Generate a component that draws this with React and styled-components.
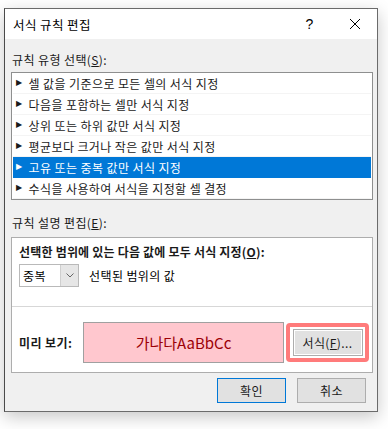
import React from "react";
import styled, { createGlobalStyle } from "styled-components";

const GlobalStyle = createGlobalStyle`
  html, body {
    margin: 0;
    padding: 0;
    background: #ffffff;
  }
  body {
    font-family: "Noto Sans CJK KR", "Noto Sans", sans-serif;
    font-size: 12px;
    letter-spacing: 0.4px;
    color: #000000;
  }
`;

const Page = styled.div`
  width: 388px;
  height: 429px;
  padding: 8px 0 0 4px;
  box-sizing: border-box;
`;

const Window = styled.div`
  width: 374px;
  height: 404px;
  box-sizing: border-box;
  border: 1px solid #6b6b6b;
  border-left-color: #4a4a4a;
  background: #f0f0f0;
  box-shadow: 0 5px 16px rgba(0, 0, 0, 0.22);
  display: flex;
  flex-direction: column;
`;

const TitleBar = styled.div`
  height: 30px;
  background: #ffffff;
  display: flex;
  align-items: center;
  padding-left: 8px;
  font-size: 12.5px;
`;

const Title = styled.div`
  flex: 1;
`;

const TitleButton = styled.div`
  width: 45px;
  height: 30px;
  display: flex;
  align-items: center;
  justify-content: center;
  font-family: "Liberation Sans", sans-serif;
  font-size: 14px;
`;

const Body = styled.div`
  flex: 1;
  display: flex;
  flex-direction: column;
  padding: 13px 4px 0 6px;
`;

const Label = styled.div`
  height: 16px;
  line-height: 16px;
  padding-left: 1px;
  margin-bottom: ${({ gap }) => gap}px;
  color: #1a1a1a;
`;

const U = styled.span`
  text-decoration: underline;
  text-underline-offset: 1px;
`;

const ListBox = styled.div`
  height: 128px;
  box-sizing: border-box;
  border: 1px solid #8e8f8f;
  background: #ffffff;
  margin-bottom: 15px;
`;

const Row = styled.div`
  height: 21px;
  margin: 0 1px;
  display: flex;
  align-items: center;
  padding-left: 3px;
  gap: 6px;
  box-sizing: border-box;
  border-bottom: 1px solid ${({ selected }) => (selected ? "#0078d7" : "#f4f4f4")};
  background: ${({ selected }) => (selected ? "#0078d7" : "#ffffff")};
  color: ${({ selected }) => (selected ? "#ffffff" : "#1a1a1a")};
`;

const Arrow = styled.span`
  font-size: 8px;
  line-height: 1;
  font-family: "DejaVu Sans", sans-serif;
`;

const DescBox = styled.div`
  height: 136px;
  box-sizing: border-box;
  border: 1px solid #adadad;
  background: #ffffff;
  display: flex;
  flex-direction: column;
`;

const DescTop = styled.div`
  padding: 6px 7px 0;
  height: 69px;
  box-sizing: border-box;
  border-bottom: 1px solid #d7d7d7;
`;

const BoldText = styled.div`
  font-weight: 700;
  letter-spacing: 0.2px;
  line-height: 16px;
  height: 16px;
  color: #1a1a1a;
`;

const ConditionRow = styled.div`
  margin-top: 4px;
  display: flex;
  align-items: center;
  gap: 10px;
`;

const Select = styled.div`
  width: 60px;
  height: 23px;
  box-sizing: border-box;
  border: 1px solid #b9b9b9;
  display: flex;
  background: #ffffff;
`;

const SelectValue = styled.div`
  flex: 1;
  padding-left: 3px;
  line-height: 21px;
`;

const SelectArrow = styled.div`
  width: 17px;
  background: #e6e6e6;
  border-left: 1px solid #cfcfcf;
  display: flex;
  align-items: center;
  justify-content: center;
`;

const PreviewRow = styled.div`
  flex: 1;
  display: flex;
  align-items: center;
  padding: 6px 0 0 7px;
`;

const PreviewLabel = styled.div`
  width: 64px;
  font-weight: 700;
  color: #1a1a1a;
`;

const PreviewBox = styled.div`
  width: 201px;
  height: 41px;
  box-sizing: border-box;
  border: 1px solid #a0a0a0;
  background: #ffc7ce;
  color: #9c0006;
  font-size: 15px;
  letter-spacing: 0;
  display: flex;
  align-items: center;
  justify-content: center;
`;

const Highlight = styled.div`
  margin-left: 2px;
  width: 83px;
  height: 39px;
  box-sizing: border-box;
  border: 4px solid #ff7b7b;
  border-radius: 4px;
  display: flex;
  align-items: center;
  justify-content: center;
`;

const Button = styled.div`
  width: ${({ w }) => w}px;
  height: ${({ h }) => h}px;
  box-sizing: border-box;
  border: 1px solid ${({ primary }) => (primary ? "#0078d7" : "#adadad")};
  box-shadow: ${({ inset }) => (inset ? "inset 0 0 0 1px #ffffff" : "none")};
  background: #e1e1e1;
  display: flex;
  align-items: center;
  justify-content: center;
  color: #1a1a1a;
`;

const Footer = styled.div`
  display: flex;
  justify-content: flex-end;
  gap: 11px;
  padding: 5px 7px 0 0;
`;

const rules = [
  "셀 값을 기준으로 모든 셀의 서식 지정",
  "다음을 포함하는 셀만 서식 지정",
  "상위 또는 하위 값만 서식 지정",
  "평균보다 크거나 작은 값만 서식 지정",
  "고유 또는 중복 값만 서식 지정",
  "수식을 사용하여 서식을 지정할 셀 결정",
];

export default function App() {
  return (
    <Page>
      <GlobalStyle />
      <Window>
        <TitleBar>
          <Title>서식 규칙 편집</Title>
          <TitleButton>?</TitleButton>
          <TitleButton>
            <svg width="12" height="12" viewBox="0 0 12 12">
              <path d="M1 1L11 11M11 1L1 11" stroke="#000" strokeWidth="1" />
            </svg>
          </TitleButton>
        </TitleBar>
        <Body>
          <Label gap={4}>
            규칙 유형 선택(<U>S</U>):
          </Label>
          <ListBox>
            {rules.map((r, i) => (
              <Row key={r} selected={i === 4}>
                <Arrow>▶</Arrow>
                {r}
              </Row>
            ))}
          </ListBox>
          <Label gap={6}>
            규칙 설명 편집(<U>E</U>):
          </Label>
          <DescBox>
            <DescTop>
              <BoldText>
                선택한 범위에 있는 다음 값에 모두 서식 지정(<U>O</U>):
              </BoldText>
              <ConditionRow>
                <Select>
                  <SelectValue>중복</SelectValue>
                  <SelectArrow>
                    <svg width="8" height="5" viewBox="0 0 8 5">
                      <path d="M0.5 0.5L4 4L7.5 0.5" stroke="#666" fill="none" />
                    </svg>
                  </SelectArrow>
                </Select>
                <span>선택된 범위의 값</span>
              </ConditionRow>
            </DescTop>
            <PreviewRow>
              <PreviewLabel>미리 보기:</PreviewLabel>
              <PreviewBox>가나다AaBbCc</PreviewBox>
              <Highlight>
                <Button inset w={70} h={27}>
                  서식(<U>F</U>)...
                </Button>
              </Highlight>
            </PreviewRow>
          </DescBox>
          <Footer>
            <Button primary w={69} h={25}>
              확인
            </Button>
            <Button w={69} h={25}>
              취소
            </Button>
          </Footer>
        </Body>
      </Window>
    </Page>
  );
}
